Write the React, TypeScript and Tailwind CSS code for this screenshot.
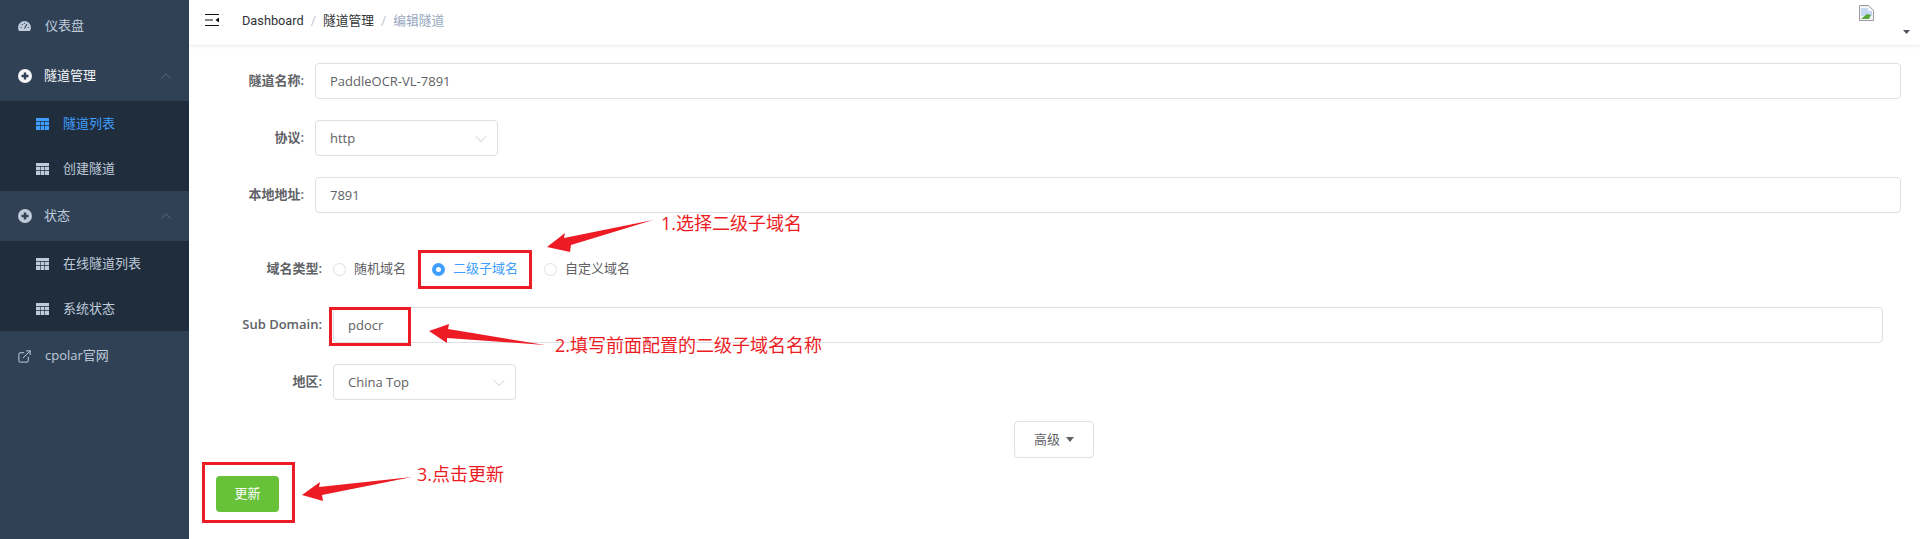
import type { ReactNode } from "react";
import { ChevronDown, ChevronUp, ExternalLink } from "lucide-react";

function TableIcon({ active }: { active?: boolean }) {
  return (
    <svg width="13" height="12" viewBox="0 0 13 12" className={active ? "text-[#409eff]" : "text-[#bfcbd9]"}>
      <path fill="currentColor" d="M0 0h13v3H0zM0 3.8h4v3.4H0zM4.6 3.8h3.8v3.4H4.6zM9 3.8h4v3.4H9zM0 8h4v4H0zM4.6 8h3.8v4H4.6zM9 8h4v4H9z" />
    </svg>
  );
}

function PlusCircle({ bright }: { bright?: boolean }) {
  return (
    <svg width="14" height="14" viewBox="0 0 14 14">
      <circle cx="7" cy="7" r="7" fill={bright ? "#f4f5f7" : "#bfcbd9"} />
      <path d="M7 3.5v7M3.5 7h7" stroke="#304156" strokeWidth="2.4" />
    </svg>
  );
}

function DashIcon() {
  return (
    <svg width="13" height="10" viewBox="0 0 13 10">
      <path fill="#bfcbd9" d="M6.5 0A6.5 6.5 0 0 0 0 6.5C0 7.8.4 9 1 10h11c.6-1 1-2.2 1-3.5A6.5 6.5 0 0 0 6.5 0z" />
      <path d="M6.5 7.5 9 3M2.5 6.5h1M9.8 6.5h1M4 3l.6.8M6.5 1.8v1" stroke="#304156" strokeWidth="1.1" />
    </svg>
  );
}

function SubItem({ label, active }: { label: string; active?: boolean }) {
  return (
    <div className={`flex h-[45px] items-center gap-[14px] pl-9 text-[13px] ${active ? "text-[#409eff]" : "text-[#bfcbd9]"}`}>
      <TableIcon active={active} />
      <span>{label}</span>
    </div>
  );
}

function Group({ label, bright }: { label: string; bright?: boolean }) {
  return (
    <div className="flex h-[50px] items-center pl-[18px] pr-[14px] text-[13px] text-[#bfcbd9]">
      <PlusCircle bright={bright} />
      <span className={`ml-[12px] flex-1 ${bright ? "text-[#f4f5f7]" : ""}`}>{label}</span>
      <ChevronUp className="size-[18px] text-[#66768a]" strokeWidth={1} />
    </div>
  );
}

function Sidebar() {
  return (
    <aside className="w-[189px] shrink-0 bg-[#304156]">
      <div className="flex h-[51px] items-center gap-[14px] pl-[18px] text-[13px] text-[#bfcbd9]">
        <DashIcon />
        <span>仪表盘</span>
      </div>
      <Group label="隧道管理" bright />
      <div className="bg-[#1f2d3d]">
        <SubItem label="隧道列表" active />
        <SubItem label="创建隧道" />
      </div>
      <Group label="状态" />
      <div className="bg-[#1f2d3d]">
        <SubItem label="在线隧道列表" />
        <SubItem label="系统状态" />
      </div>
      <div className="flex h-[50px] items-center gap-[13px] pl-[17px] text-[13px] text-[#bfcbd9]">
        <ExternalLink className="size-[15px]" strokeWidth={1.6} />
        <span>cpolar官网</span>
      </div>
    </aside>
  );
}

function Header() {
  return (
    <header className="flex h-[46px] items-center border-b border-[#f0f1f3] pl-4 pr-[10px] shadow-[0_1px_3px_rgba(0,21,41,0.05)]">
      <svg width="14" height="12" viewBox="0 0 14 12" className="mt-[-5px]">
        <path d="M0 .5h14M0 6h8M0 11.5h14" stroke="#111" strokeWidth="1.2" />
        <path d="M14 3.5v5L10.5 6z" fill="#111" />
      </svg>
      <nav className="ml-[23px] mt-[-4px] flex items-center font-['Roboto','Noto_Sans_CJK_SC',sans-serif] text-[12.75px] text-[#303133]">
        <span>Dashboard</span>
        <span className="mx-[7px] text-[#c0c4cc]">/</span>
        <span>隧道管理</span>
        <span className="mx-[7px] text-[#c0c4cc]">/</span>
        <span className="text-[#97a8be]">编辑隧道</span>
      </nav>
      <div className="ml-auto flex self-start">
        <svg width="15" height="16" viewBox="0 0 15 16" className="mt-[5px]">
          <path d="M.5.5h9l5 5v10H.5z" fill="#f3f6fb" stroke="#9a9a9a" />
          <path d="M2 3h7v3h4v5H2z" fill="#c5d7f2" />
          <path d="M2 14l6-5 4 1-2 4z" fill="#58a83a" />
        </svg>
        <svg width="7" height="4" viewBox="0 0 7 4" className="ml-[29px] mt-[30px]">
          <path d="M0 0h7L3.5 4z" fill="#4f5560" />
        </svg>
      </div>
    </header>
  );
}

function Row({ label, width, children, className }: { label: string; width: string; children: ReactNode; className?: string }) {
  return (
    <div className={`flex items-center ${className ?? ""}`}>
      <label className={`${width} shrink-0 pr-[11px] text-right text-[13px] font-semibold text-[#606266]`}>{label}</label>
      {children}
    </div>
  );
}

function TextBox({ value, className }: { value: string; className?: string }) {
  return (
    <div className={`flex h-9 items-center rounded border border-[#dcdfe6] px-[14px] pt-px text-[13px] text-[#606266] ${className ?? ""}`}>
      {value}
    </div>
  );
}

function SelectBox({ value }: { value: string }) {
  return (
    <div className="flex h-9 w-[183px] items-center justify-between rounded border border-[#dcdfe6] pl-[14px] pr-[6px] pt-px text-[13px] text-[#606266]">
      <span>{value}</span>
      <ChevronDown className="size-[20px] text-[#c0c4cc]" strokeWidth={1} />
    </div>
  );
}

function Radio({ label, checked }: { label: string; checked?: boolean }) {
  return (
    <div className={`flex items-center gap-[8px] text-[13px] ${checked ? "text-[#409eff]" : "text-[#606266]"}`}>
      {checked ? (
        <span className="flex size-[13px] items-center justify-center rounded-full bg-[#409eff]">
          <span className="size-[5px] rounded-full bg-white" />
        </span>
      ) : (
        <span className="size-[13px] rounded-full border border-[#dcdfe6]" />
      )}
      <span>{label}</span>
    </div>
  );
}

// 红色标注: 框、箭头、文字都盖在表单上面
function Annotations() {
  return (
    <div className="pointer-events-none absolute inset-0">
      <div className="absolute left-[418px] top-[250px] h-[39px] w-[114px] border-[3px] border-[#ed1c24]" />
      <div className="absolute left-[329px] top-[307px] h-[39px] w-[82px] border-[3px] border-[#ed1c24]" />
      <div className="absolute left-[202px] top-[462px] h-[61px] w-[93px] border-[3px] border-[#ed1c24]" />
      <svg width="1920" height="539" className="absolute inset-0">
        <polygon fill="#ed1c24" points="547,247 565,233 564,238 653,220 571,245 570,252" />
        <polygon fill="#ed1c24" points="429,331 449,324 448,329 545,345 447,338 447,343" />
        <polygon fill="#ed1c24" points="302,495 320,482 319,487 412,477 322,495 323,501" />
      </svg>
      <span className="absolute left-[661px] top-[211px] text-[18px] leading-6 text-[#ed1c24]">1.选择二级子域名</span>
      <span className="absolute left-[555px] top-[333px] text-[18px] leading-6 text-[#ed1c24]">2.填写前面配置的二级子域名名称</span>
      <span className="absolute left-[417px] top-[462px] text-[18px] leading-6 text-[#ed1c24]">3.点击更新</span>
    </div>
  );
}

export default function App() {
  return (
    <div className="relative flex h-[539px] overflow-hidden bg-white font-['Open_Sans','Noto_Sans_CJK_SC',sans-serif]">
      <Sidebar />
      <main className="min-w-0 flex-1">
        <Header />
        <div className="pl-[13px] pr-[19px] pt-[17px]">
          <div className="flex flex-col gap-[21px]">
            <Row label="隧道名称:" width="w-[113px]">
              <TextBox value="PaddleOCR-VL-7891" className="flex-1" />
            </Row>
            <Row label="协议:" width="w-[113px]">
              <SelectBox value="http" />
            </Row>
            <Row label="本地地址:" width="w-[113px]">
              <TextBox value="7891" className="flex-1" />
            </Row>
          </div>
          <Row label="域名类型:" width="w-[131px]" className="mt-[46px] h-5">
            <div className="flex gap-[26px]">
              <Radio label="随机域名" />
              <Radio label="二级子域名" checked />
              <Radio label="自定义域名" />
            </div>
          </Row>
          <div className="mr-[18px] mt-[28px] flex flex-col gap-[21px]">
            <Row label="Sub Domain:" width="w-[131px]">
              <TextBox value="pdocr" className="flex-1" />
            </Row>
            <Row label="地区:" width="w-[131px]">
              <SelectBox value="China Top" />
            </Row>
          </div>
          <div className="mt-[21px] flex pl-[812px]">
            <button className="flex h-[37px] w-20 items-center justify-center gap-[6px] rounded border border-[#dcdfe6] text-[13px] text-[#606266]">
              高级
              <span className="border-x-[4px] border-t-[5px] border-x-transparent border-t-[#606266]" />
            </button>
          </div>
          <button className="ml-[14px] mt-[18px] h-9 w-[63px] rounded bg-[#67c23a] text-[13px] text-white">更新</button>
        </div>
      </main>
      <Annotations />
    </div>
  );
}
